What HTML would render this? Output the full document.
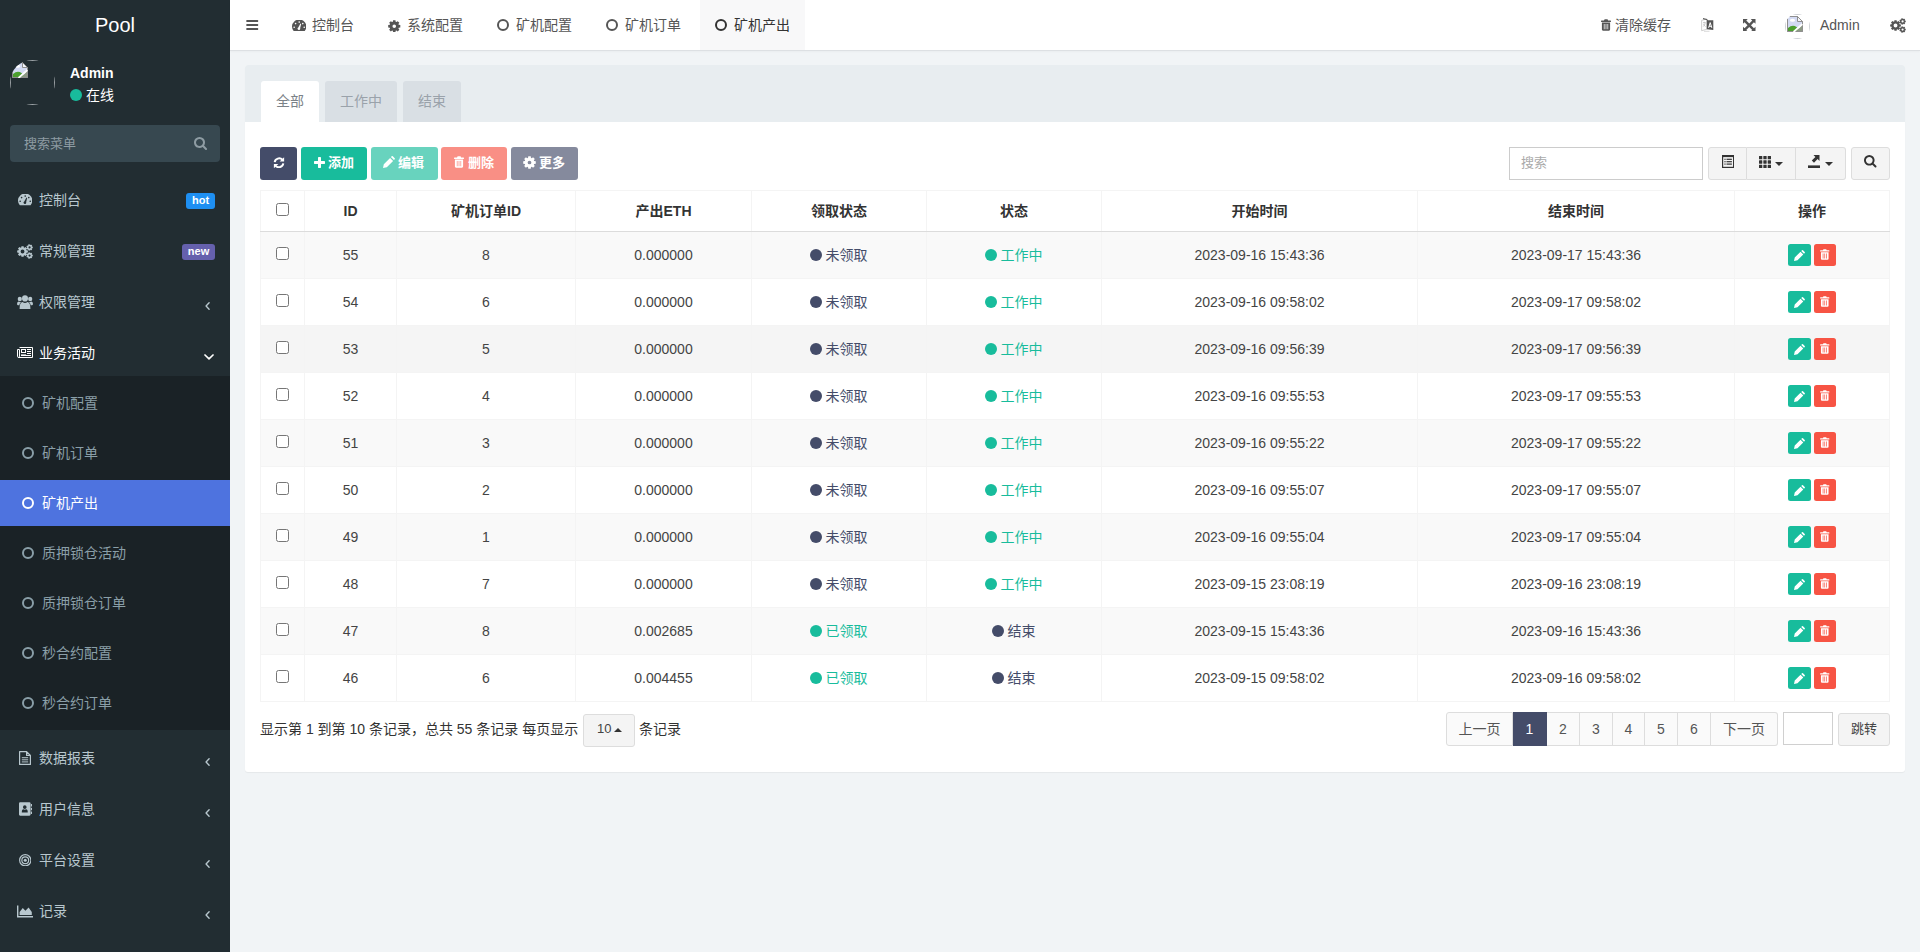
<!DOCTYPE html>
<html lang="zh-CN">
<head>
<meta charset="utf-8">
<title>Pool</title>
<style>
*{box-sizing:border-box;margin:0;padding:0}
html,body{width:1920px;height:952px;overflow:hidden}
body{font-family:"Liberation Sans","Noto Sans CJK SC",sans-serif;font-size:14px;color:#444;background:#f1f4f6;position:relative}
a{text-decoration:none;color:inherit;display:block}
ul{list-style:none}
svg{display:block}
i{font-style:normal}
/* sidebar */
.sidebar{position:absolute;left:0;top:0;width:230px;height:952px;background:#222d32;color:#b8c7ce}
.logo{height:50px;line-height:50px;text-align:center;color:#fff;font-size:20px}
.user{position:absolute;left:0;top:50px;width:230px;height:65px}
.user .avatar{position:absolute;left:10px;top:10px;width:45px;height:45px;border-radius:50%;overflow:hidden}
.sq{position:absolute;left:0;top:0;right:0;bottom:0;border:1px solid #9aa0a4}
.bk{position:absolute;left:2px;top:2px}
.user .name{position:absolute;left:70px;top:14px;color:#fff;font-weight:bold;font-size:14px;line-height:18px}
.user .st{position:absolute;left:70px;top:36px;color:#fff;font-size:14px;line-height:18px}
.user .st i{display:inline-block;width:12px;height:12px;border-radius:50%;background:#18bc9c;margin-right:4px;vertical-align:-1px}
.msearch{position:absolute;left:10px;top:125px;width:210px;height:37px;background:#374850;border-radius:4px;color:#8e9ca3;font-size:13px;line-height:38px;padding-left:14px}
.msearch .sic{position:absolute;left:184px;top:12px}
.menu{position:absolute;left:0;top:177px;width:230px}
.menu li.m{height:46px;margin-bottom:5px;position:relative;color:#b8c7ce;font-size:14px}
.menu li.m .ic{position:absolute;left:15px;top:13px;width:20px;height:20px;display:flex;align-items:center;justify-content:center}
.menu li.m .tx{position:absolute;left:39px;top:13px;line-height:20px}
.menu li.m .arr{position:absolute;left:205px;top:23px}
.menu li.m .arr.dn{left:204px;top:24px}
.menu li.m.act{color:#fff;margin-bottom:0}
.badge{position:absolute;top:16px;height:16px;border-radius:3px;color:#fff;font-size:11px;font-weight:bold;line-height:15px;text-align:center}
.subw{margin-bottom:5px}
.sub{background:#1a2226;height:354px;padding-top:4px}
.sub li{height:46px;margin-bottom:4px;position:relative;color:#8a9fa8;font-size:14px}
.o{display:block;width:12px;height:12px;border:2px solid #8a9fa8;border-radius:50%}
.sub li .o{position:absolute;left:22px;top:17px}
.sub li .tx{position:absolute;left:42px;top:13px;line-height:20px}
.sub li.on{background:#4e73df;color:#fff}
.sub li.on .o{border-color:#fff}
/* header */
.header{position:absolute;left:230px;top:0;width:1690px;height:51px;background:#fff;border-bottom:1px solid #dde0e3;box-shadow:0 1px 2px rgba(0,0,0,.03)}
.header .t{position:absolute;top:0;height:50px;line-height:50px;color:#555;font-size:14px;white-space:nowrap}
.header .t .hi{position:absolute}
.header .t .tt{position:absolute;top:0}
.header .t.cur{background:#f8f8f9;color:#333}
.uav{position:absolute;left:0;top:14px;width:25px;height:25px;border-radius:50%;overflow:hidden}
.uav .sq{border-color:#cfd2d6}.uav .bk{left:2px;top:2px}
/* panel */
.panel{position:absolute;left:245px;top:65px;width:1660px;height:707px;background:#fff;border-radius:3px;box-shadow:0 1px 1px rgba(0,0,0,.05)}
.phead{position:absolute;left:0;top:0;width:1660px;height:57px;background:#e8edf0;border-radius:3px 3px 0 0}
.tab{position:absolute;top:16px;height:41px;line-height:40px;text-align:center;background:#d9dfe4;color:#9aa2aa;font-size:14px;border-radius:3px 3px 0 0}
.tab.on{background:#fff;color:#7b8288}
.toolbar{position:absolute;left:0;top:82px;width:1660px;height:33px}
.btn{position:absolute;top:0;height:33px;border-radius:3px;color:#fff;font-size:13px;line-height:31px;white-space:nowrap}
.btn .bi,.gb .bi{position:absolute}
.btn .bt{position:absolute;top:0;font-weight:bold}
.b-pri{background:#444c69}.b-suc{background:#18bc9c}.b-dan{background:#f75444}
.btn.dis{opacity:.65}
.sinput{position:absolute;left:1264px;top:0;width:194px;height:33px;border:1px solid #ccc;background:#fff;color:#aaa;font-size:13px;line-height:30px;padding-left:11px}
.bgroup{position:absolute;left:1463px;top:0;width:138px;height:33px}
.gb{position:absolute;top:0;height:33px;background:#f4f4f4;border:1px solid #ddd;border-left-width:0}
.bgroup .gb:first-child{border-left-width:1px;border-radius:3px 0 0 3px}
.bgroup .gb:last-child{border-radius:0 3px 3px 0}
.gb.solo{border-left-width:1px;border-radius:3px}
/* table */
.tb{position:absolute;left:15px;top:125px;width:1630px;border-collapse:collapse;table-layout:fixed;border:1px solid #f4f4f4}
.tb th,.tb td{border:1px solid #f4f4f4;text-align:center;vertical-align:middle;font-size:14px;color:#444;padding:0}
.tb th{height:41px;font-weight:bold;color:#333;border-bottom:1px solid #dcdcdc;padding-bottom:2px}
.tb td{height:47px}
.tb tbody tr:nth-child(odd){background:#f9f9f9}
.tb tbody tr:nth-child(3){background:#f5f5f5}
.cb{display:inline-block;width:13px;height:13px;border:1px solid #767676;border-radius:2.500px;background:#fff;vertical-align:middle;position:relative;top:-3px}
.s{display:inline-block;white-space:nowrap;position:relative;top:-1px;left:-.5px}
.s i{display:inline-block;width:12px;height:12px;border-radius:50%;margin-right:4px;vertical-align:-1px}
.s.p{color:#444c69}.s.p i{background:#444c69}
.s.g{color:#18bc9c}.s.g i{background:#18bc9c}
.ob{display:inline-block;width:22.500px;height:22px;border-radius:2.500px;vertical-align:middle;position:relative}
.ob svg{position:absolute}
.ob.e{background:#18bc9c;margin-right:3.500px}.ob.e svg{left:6px;top:5.500px}
.ob.d{background:#f75444;width:21.500px}.ob.d svg{left:6px;top:5px}
/* footer */
.pinfo{position:absolute;left:15px;top:648px;height:33px;line-height:33px;font-size:14px;color:#333;white-space:nowrap}
.psize{display:inline-block;width:52px;height:33px;line-height:28px;left:1px;color:#444;border:1px solid #ddd;border-radius:3px;background:#f4f4f4;font-size:13px;padding-left:13px;position:relative;vertical-align:middle;margin:0 1px 0 0}
.psize .cu{position:absolute;left:30px;top:13px}
.pager{position:absolute;left:1201px;top:647px;height:34px;display:flex}
.pager li{height:34px;line-height:32px;text-align:center;border:1px solid #ddd;border-left-width:0;background:#fafafa;color:#555;font-size:14px}
.pager li:first-child{border-left-width:1px;border-radius:3px 0 0 3px}
.pager li:last-child{border-radius:0 3px 3px 0}
.pager li.on{background:#444c69;border-color:#444c69;color:#fff}
.jump{position:absolute;left:1538px;top:647px;width:50px;height:33px;border:1px solid #d0d0d0;background:#fff}
.jbtn{position:absolute;left:1593px;top:648px;width:52px;height:33px;line-height:29px;text-align:center;border:1px solid #ddd;border-radius:3px;background:#f4f4f4;color:#444;font-size:13px}
.tb th .cb{top:-2px}
.tb th .lat{position:relative;top:1px}
</style>
</head>
<body>
<aside class="sidebar">
<a class="logo">Pool</a>
<div class="user"><div class="avatar"><span class="sq"></span><span class="bk"><svg width="16" height="16" viewBox="0 0 16 16" ><path d="M.5 .5 H10.500 L15.500 5.500 V15.500 H.5Z" fill="#d3daf3" stroke="#8f8f8f" stroke-width="1"/><ellipse cx="5.500" cy="4.300" rx="2.600" ry="1.500" fill="#fff"/><path d="M1 15 V12 Q5.500 8 9.500 11 L14.800 15Z" fill="#4c9f2f"/><path d="M15 9 V15 H9.500Z" fill="#8d9a86"/><path d="M6.500 16 L16 7.500" stroke="#fff" stroke-width="1.800" fill="none"/><path d="M10.500 .5 V5.500 H15.500Z" fill="#f4f5fa" stroke="#8f8f8f" stroke-width="1" stroke-linejoin="round"/><path d="M.5 .5 H10.500 L15.500 5.500 V8.300 M15.500 11.500 V15.500 H9.300 M5.800 15.500 H.5 V.5" fill="none" stroke="#8f8f8f" stroke-width="1"/></svg></span></div><p class="name">Admin</p><p class="st"><i></i>在线</p></div>
<div class="msearch">搜索菜单<span class="sic"><svg width="13" height="13" viewBox="64 128 1664 1664" ><path fill="#8e9ca3" d="M1216 832q0-185-131.500-316.500t-316.500-131.500-316.500 131.500-131.500 316.500 131.500 316.500 316.500 131.500 316.500-131.500 131.500-316.500zm512 832q0 52-38 90t-90 38q-54 0-90-38l-343-342q-179 124-399 124-143 0-273.500-55.500t-225-150-150-225-55.500-273.500 55.500-273.500 150-225 225-150 273.500-55.500 273.500 55.500 225 150 150 225 55.500 273.500q0 220-124 399l343 343q37 37 37 90z"/></svg></span></div>
<ul class="menu">
<li class="m "><span class="ic"><svg width="14.4" height="11.2" viewBox="0 0 14 11.200" preserveAspectRatio="none"><path fill="#b8c7ce" fill-rule="evenodd" d="M1.6 11 A7 7 0 1 1 12.4 11 Q12.2 11.200 11.800 11.200 H2.200 Q1.800 11.200 1.600 11Z M1.30 7.20 a.8 .8 0 1 0 1.6 0 a.8 .8 0 1 0 -1.6 0Z M2.70 3.60 a.8 .8 0 1 0 1.6 0 a.8 .8 0 1 0 -1.6 0Z M6.20 2.10 a.8 .8 0 1 0 1.6 0 a.8 .8 0 1 0 -1.6 0Z M9.70 3.60 a.8 .8 0 1 0 1.6 0 a.8 .8 0 1 0 -1.6 0Z M11.10 7.20 a.8 .8 0 1 0 1.6 0 a.8 .8 0 1 0 -1.6 0Z M6.1 7.6 L8.2 3.6 L8.9 3.9 L7.9 8.200 A1.300 1.300 0 1 1 6.100 7.600Z"/></svg></span><span class="tx">控制台</span><span class="badge" style="left:186px;width:29px;background:#1e8ff2">hot</span></li>
<li class="m "><span class="ic"><svg width="16" height="15" viewBox="0 0 18 17" ><path fill="#b8c7ce" fill-rule="evenodd" d="M10.67 7.05 L12.28 7.26 L12.28 9.74 L10.67 9.95 L10.39 10.63 L11.37 11.92 L9.62 13.67 L8.33 12.69 L7.65 12.97 L7.44 14.58 L4.96 14.58 L4.75 12.97 L4.07 12.69 L2.78 13.67 L1.03 11.92 L2.01 10.63 L1.73 9.95 L0.12 9.74 L0.12 7.26 L1.73 7.05 L2.01 6.37 L1.03 5.08 L2.78 3.33 L4.07 4.31 L4.75 4.03 L4.96 2.42 L7.44 2.42 L7.65 4.03 L8.33 4.31 L9.62 3.33 L11.37 5.08 L10.39 6.37Z M4.00 8.50 a2.20 2.20 0 1 0 4.40 0 a2.20 2.20 0 1 0 -4.40 0Z"/><path fill="#b8c7ce" fill-rule="evenodd" d="M16.81 2.89 L17.80 3.03 L17.80 4.77 L16.81 4.91 L16.62 5.31 L17.12 6.17 L15.76 7.25 L15.04 6.57 L14.61 6.67 L14.25 7.60 L12.55 7.21 L12.63 6.22 L12.29 5.95 L11.34 6.24 L10.58 4.68 L11.41 4.12 L11.41 3.68 L10.58 3.12 L11.34 1.56 L12.29 1.85 L12.63 1.58 L12.55 0.59 L14.25 0.20 L14.61 1.13 L15.04 1.23 L15.76 0.55 L17.12 1.63 L16.62 2.49Z M12.95 3.90 a1.25 1.25 0 1 0 2.50 0 a1.25 1.25 0 1 0 -2.50 0Z"/><path fill="#b8c7ce" fill-rule="evenodd" d="M16.81 12.09 L17.80 12.23 L17.80 13.97 L16.81 14.11 L16.62 14.51 L17.12 15.37 L15.76 16.45 L15.04 15.77 L14.61 15.87 L14.25 16.80 L12.55 16.41 L12.63 15.42 L12.29 15.15 L11.34 15.44 L10.58 13.88 L11.41 13.32 L11.41 12.88 L10.58 12.32 L11.34 10.76 L12.29 11.05 L12.63 10.78 L12.55 9.79 L14.25 9.40 L14.61 10.33 L15.04 10.43 L15.76 9.75 L17.12 10.83 L16.62 11.69Z M12.95 13.10 a1.25 1.25 0 1 0 2.50 0 a1.25 1.25 0 1 0 -2.50 0Z"/></svg></span><span class="tx">常规管理</span><span class="badge" style="left:182px;width:33px;background:#6560ad">new</span></li>
<li class="m "><span class="ic"><svg width="16" height="14.5" viewBox="0 0 16 14" preserveAspectRatio="none"><circle cx="8" cy="3.300" r="3" fill="#b8c7ce"/><path fill="#b8c7ce" d="M3.200 14 Q2.600 14 2.600 13 Q2.600 7 5.600 6.800 Q8 8.800 10.400 6.800 Q13.400 7 13.400 13 Q13.400 14 12.800 14Z"/><circle cx="2.800" cy="3.900" r="2.100" fill="#b8c7ce"/><path fill="#b8c7ce" d="M0 8.800 Q0 6.300 1.700 6.200 Q2.900 7 4.300 6.500 Q2.600 7.600 2.300 9.800 H.9 Q0 9.800 0 8.800Z"/><circle cx="13.200" cy="3.900" r="2.100" fill="#b8c7ce"/><path fill="#b8c7ce" d="M16 8.800 Q16 6.300 14.300 6.200 Q13.100 7 11.700 6.500 Q13.400 7.600 13.700 9.800 H15.100 Q16 9.800 16 8.800Z"/></svg></span><span class="tx">权限管理</span><span class="arr"><svg width="5" height="8" viewBox="0 0 6 10" ><path d="M5 1 L1.2 5 L5 9" fill="none" stroke="#b8c7ce" stroke-width="1.7" stroke-linecap="round" stroke-linejoin="round"/></svg></span></li>
<li class="m act"><span class="ic"><span style="display:block;margin-top:-2px"><svg width="16" height="11" viewBox="0 0 16 11" ><path fill="none" stroke="#fff" stroke-width="1" d="M2.500 .5 H15.500 V10.500 H1.800 Q.5 10.500 .5 9.200 V2.500 H2.500 V9.200 Q2.500 10.500 1.500 10.500"/><rect x="4.500" y="2.500" width="4" height="3" fill="none" stroke="#fff" stroke-width="1"/><rect x="10" y="2" width="4" height="1" fill="#fff"/><rect x="10" y="4" width="4" height="1" fill="#fff"/><rect x="10" y="6" width="4" height="1" fill="#fff"/><rect x="4" y="8" width="10" height="1" fill="#fff"/><rect x="4" y="7" width="5" height=".6" fill="#fff"/></svg></span></span><span class="tx">业务活动</span><span class="arr dn"><svg width="10" height="6" viewBox="0 0 10 6" ><path d="M1 1 L5 4.8 L9 1" fill="none" stroke="#fff" stroke-width="1.7" stroke-linecap="round" stroke-linejoin="round"/></svg></span></li>
<li class="subw"><ul class="sub">
<li><i class="o"></i><span class="tx">矿机配置</span></li>
<li><i class="o"></i><span class="tx">矿机订单</span></li>
<li class="on"><i class="o"></i><span class="tx">矿机产出</span></li>
<li><i class="o"></i><span class="tx">质押锁仓活动</span></li>
<li><i class="o"></i><span class="tx">质押锁仓订单</span></li>
<li><i class="o"></i><span class="tx">秒合约配置</span></li>
<li><i class="o"></i><span class="tx">秒合约订单</span></li>
</ul></li>
<li class="m "><span class="ic"><svg width="12" height="14" viewBox="0 0 12 14" ><path fill="none" stroke="#b8c7ce" stroke-width="1.200" stroke-linejoin="round" d="M.6 .6 H7.600 L11.400 4.400 V13.400 H.6Z M7.600 .6 V4.400 H11.400"/><rect x="2.800" y="6.200" width="6.400" height="1" fill="#b8c7ce"/><rect x="2.800" y="8.300" width="6.400" height="1" fill="#b8c7ce"/><rect x="2.800" y="10.400" width="6.400" height="1" fill="#b8c7ce"/></svg></span><span class="tx">数据报表</span><span class="arr"><svg width="5" height="8" viewBox="0 0 6 10" ><path d="M5 1 L1.2 5 L5 9" fill="none" stroke="#b8c7ce" stroke-width="1.7" stroke-linecap="round" stroke-linejoin="round"/></svg></span></li>
<li class="m "><span class="ic"><svg width="13" height="14" viewBox="0 0 13.500 14" ><path fill="#b8c7ce" fill-rule="evenodd" d="M1.200 0 H10.800 Q12 0 12 1.200 V12.800 Q12 14 10.800 14 H1.200 Q0 14 0 12.800 V1.200 Q0 0 1.200 0Z M6 3.200 A1.900 1.900 0 1 0 6 7 A1.900 1.900 0 1 0 6 3.200Z M2.900 10.600 H9.100 Q9.100 7.400 7.400 7.300 Q6 8.300 4.600 7.300 Q2.900 7.400 2.900 10.600Z"/><rect x="12.300" y="1.800" width="1.200" height="2.600" rx=".3" fill="#b8c7ce"/><rect x="12.300" y="5.700" width="1.200" height="2.600" rx=".3" fill="#b8c7ce"/><rect x="12.300" y="9.600" width="1.200" height="2.600" rx=".3" fill="#b8c7ce"/></svg></span><span class="tx">用户信息</span><span class="arr"><svg width="5" height="8" viewBox="0 0 6 10" ><path d="M5 1 L1.2 5 L5 9" fill="none" stroke="#b8c7ce" stroke-width="1.7" stroke-linecap="round" stroke-linejoin="round"/></svg></span></li>
<li class="m "><span class="ic"><svg width="12.5" height="12.5" viewBox="0 0 14 14" ><circle cx="7" cy="7" r="6.300" fill="none" stroke="#b8c7ce" stroke-width="1.300"/><circle cx="7" cy="7" r="3.800" fill="none" stroke="#b8c7ce" stroke-width="1.300"/><circle cx="7" cy="7" r="1.700" fill="#b8c7ce"/></svg></span><span class="tx">平台设置</span><span class="arr"><svg width="5" height="8" viewBox="0 0 6 10" ><path d="M5 1 L1.2 5 L5 9" fill="none" stroke="#b8c7ce" stroke-width="1.7" stroke-linecap="round" stroke-linejoin="round"/></svg></span></li>
<li class="m "><span class="ic"><svg width="16" height="13" viewBox="0 0 16 12" ><path fill="#b8c7ce" d="M0 0 H1.400 V10.600 H16 V12 H0Z M2.600 9.600 V6.400 L5.800 2.600 L8.400 5.200 L11.600 2 L14.800 6.400 V9.600Z"/></svg></span><span class="tx">记录</span><span class="arr"><svg width="5" height="8" viewBox="0 0 6 10" ><path d="M5 1 L1.2 5 L5 9" fill="none" stroke="#b8c7ce" stroke-width="1.7" stroke-linecap="round" stroke-linejoin="round"/></svg></span></li>
</ul>
</aside>
<header class="header">
<a class="t" style="left:16px;width:14px"><span class="hi" style="left:0;top:20px"><svg width="12.5" height="10" viewBox="0 0 13 11" ><rect x="0" y="0" width="13" height="2.2" rx=".6" fill="#555"/><rect x="0" y="4.4" width="13" height="2.2" rx=".6" fill="#555"/><rect x="0" y="8.8" width="13" height="2.2" rx=".6" fill="#555"/></svg></span></a>
<a class="t" style="left:47px;width:92px"><span class="hi" style="left:15px;top:20px"><svg width="14.4" height="11.2" viewBox="0 0 14 11.200" preserveAspectRatio="none"><path fill="#555" fill-rule="evenodd" d="M1.6 11 A7 7 0 1 1 12.4 11 Q12.2 11.200 11.800 11.200 H2.200 Q1.800 11.200 1.600 11Z M1.30 7.20 a.8 .8 0 1 0 1.6 0 a.8 .8 0 1 0 -1.6 0Z M2.70 3.60 a.8 .8 0 1 0 1.6 0 a.8 .8 0 1 0 -1.6 0Z M6.20 2.10 a.8 .8 0 1 0 1.6 0 a.8 .8 0 1 0 -1.6 0Z M9.70 3.60 a.8 .8 0 1 0 1.6 0 a.8 .8 0 1 0 -1.6 0Z M11.10 7.20 a.8 .8 0 1 0 1.6 0 a.8 .8 0 1 0 -1.6 0Z M6.1 7.6 L8.2 3.6 L8.9 3.9 L7.9 8.200 A1.300 1.300 0 1 1 6.100 7.600Z"/></svg></span><span class="tt" style="left:35px">控制台</span></a>
<a class="t" style="left:143px;width:105px"><span class="hi" style="left:15px;top:19.5px"><svg width="12.5" height="12.5" viewBox="0 0 16 16" ><path fill="#555" fill-rule="evenodd" d="M13.72 6.20 L15.75 6.47 L15.75 9.53 L13.72 9.80 L13.32 10.78 L14.56 12.40 L12.40 14.56 L10.78 13.32 L9.80 13.72 L9.53 15.75 L6.47 15.75 L6.20 13.72 L5.22 13.32 L3.60 14.56 L1.44 12.40 L2.68 10.78 L2.28 9.80 L0.25 9.53 L0.25 6.47 L2.28 6.20 L2.68 5.22 L1.44 3.60 L3.60 1.44 L5.22 2.68 L6.20 2.28 L6.47 0.25 L9.53 0.25 L9.80 2.28 L10.78 2.68 L12.40 1.44 L14.56 3.60 L13.32 5.22Z M5.70 8.00 a2.30 2.30 0 1 0 4.60 0 a2.30 2.30 0 1 0 -4.60 0Z"/></svg></span><span class="tt" style="left:34px">系统配置</span></a>
<a class="t" style="left:252px;width:105px"><span class="hi" style="left:15px;top:19px"><i class="o" style="border-color:#555"></i></span><span class="tt" style="left:34px">矿机配置</span></a>
<a class="t" style="left:361px;width:105px"><span class="hi" style="left:15px;top:19px"><i class="o" style="border-color:#555"></i></span><span class="tt" style="left:34px">矿机订单</span></a>
<a class="t cur" style="left:470px;width:105px"><span class="hi" style="left:15px;top:19px"><i class="o" style="border-color:#333"></i></span><span class="tt" style="left:34px">矿机产出</span></a>
<a class="t" style="left:1371px;width:72px"><span class="hi" style="left:0;top:19px"><svg width="10" height="12" viewBox="0 0 11 13" ><path fill="#555" fill-rule="evenodd" d="M4 0.3h3.2l.6 1.3H10.6q.4 0 .4.4v.7q0 .4-.4.4H.4Q0 3.100 0 2.700V2q0-.4.4-.4H3.300Z M1 3.800H10V11.500q0 1.200-1.200 1.200H2.200Q1 12.700 1 11.500Z M3.100 5.400V11.200H3.900V5.400Z M5.100 5.400V11.200H5.900V5.400Z M7.100 5.400V11.200H7.900V5.400Z"/></svg></span><span class="tt" style="left:14px">清除缓存</span></a>
<a class="t" style="left:1471px;width:13px"><span class="hi" style="left:0;top:17px"><svg width="13" height="15" viewBox="0 0 13 15" ><path d="M.6 3.400 L5.800 2 V12.300 L.6 13.700Z" fill="#fff" stroke="#c9c9c9" stroke-width=".9"/><path d="M2 5.600 H4.600 M3.300 4.800 V5.600 M2.200 9.600 Q3.900 8.300 4.300 5.600 M2.400 6.800 Q3 8.600 4.600 9.600" fill="none" stroke="#b5b5b5" stroke-width=".7"/><path d="M2 1 L5.800 2 L7 3.300 H12.300 V13 L5.800 12.300 V3 L2 2.200Z" fill="#555"/><path d="M7.600 10.800 L9.200 5.600 L10.800 10.800 M8.100 9.300 H10.300" fill="none" stroke="#fff" stroke-width="1"/><path d="M3 14.300 H8.500" stroke="#c9c9c9" stroke-width=".7"/></svg></span></a>
<a class="t" style="left:1513px;width:13px"><span class="hi" style="left:0;top:18.500px"><svg width="12.5" height="12.5" viewBox="0 0 13 13" ><path fill="#555" d="M0 0 H5 L3.400 1.600 L6.500 4.700 L8.600 2.600 L9.600 1.600 L8 0 H13 V5 L11.400 3.400 L8.300 6.500 L11.400 9.600 L13 8 V13 H8 L9.600 11.400 L6.500 8.300 L3.400 11.400 L5 13 H0 V8 L1.600 9.600 L4.700 6.500 L1.600 3.400 L0 5Z"/></svg></span></a>
<a class="t" style="left:1555px;width:76px"><span class="uav"><span class="sq"></span><span class="bk"><svg width="16" height="16" viewBox="0 0 16 16" ><path d="M.5 .5 H10.500 L15.500 5.500 V15.500 H.5Z" fill="#d3daf3" stroke="#8f8f8f" stroke-width="1"/><ellipse cx="5.500" cy="4.300" rx="2.600" ry="1.500" fill="#fff"/><path d="M1 15 V12 Q5.500 8 9.500 11 L14.800 15Z" fill="#4c9f2f"/><path d="M15 9 V15 H9.500Z" fill="#8d9a86"/><path d="M6.500 16 L16 7.500" stroke="#fff" stroke-width="1.800" fill="none"/><path d="M10.500 .5 V5.500 H15.500Z" fill="#f4f5fa" stroke="#8f8f8f" stroke-width="1" stroke-linejoin="round"/><path d="M.5 .5 H10.500 L15.500 5.500 V8.300 M15.500 11.500 V15.500 H9.300 M5.800 15.500 H.5 V.5" fill="none" stroke="#8f8f8f" stroke-width="1"/></svg></span></span><span class="tt" style="left:35px">Admin</span></a>
<a class="t" style="left:1660px;width:16px"><span class="hi" style="left:0;top:18px"><svg width="16" height="15" viewBox="0 0 18 17" ><path fill="#555" fill-rule="evenodd" d="M10.67 7.05 L12.28 7.26 L12.28 9.74 L10.67 9.95 L10.39 10.63 L11.37 11.92 L9.62 13.67 L8.33 12.69 L7.65 12.97 L7.44 14.58 L4.96 14.58 L4.75 12.97 L4.07 12.69 L2.78 13.67 L1.03 11.92 L2.01 10.63 L1.73 9.95 L0.12 9.74 L0.12 7.26 L1.73 7.05 L2.01 6.37 L1.03 5.08 L2.78 3.33 L4.07 4.31 L4.75 4.03 L4.96 2.42 L7.44 2.42 L7.65 4.03 L8.33 4.31 L9.62 3.33 L11.37 5.08 L10.39 6.37Z M4.00 8.50 a2.20 2.20 0 1 0 4.40 0 a2.20 2.20 0 1 0 -4.40 0Z"/><path fill="#555" fill-rule="evenodd" d="M16.81 2.89 L17.80 3.03 L17.80 4.77 L16.81 4.91 L16.62 5.31 L17.12 6.17 L15.76 7.25 L15.04 6.57 L14.61 6.67 L14.25 7.60 L12.55 7.21 L12.63 6.22 L12.29 5.95 L11.34 6.24 L10.58 4.68 L11.41 4.12 L11.41 3.68 L10.58 3.12 L11.34 1.56 L12.29 1.85 L12.63 1.58 L12.55 0.59 L14.25 0.20 L14.61 1.13 L15.04 1.23 L15.76 0.55 L17.12 1.63 L16.62 2.49Z M12.95 3.90 a1.25 1.25 0 1 0 2.50 0 a1.25 1.25 0 1 0 -2.50 0Z"/><path fill="#555" fill-rule="evenodd" d="M16.81 12.09 L17.80 12.23 L17.80 13.97 L16.81 14.11 L16.62 14.51 L17.12 15.37 L15.76 16.45 L15.04 15.77 L14.61 15.87 L14.25 16.80 L12.55 16.41 L12.63 15.42 L12.29 15.15 L11.34 15.44 L10.58 13.88 L11.41 13.32 L11.41 12.88 L10.58 12.32 L11.34 10.76 L12.29 11.05 L12.63 10.78 L12.55 9.79 L14.25 9.40 L14.61 10.33 L15.04 10.43 L15.76 9.75 L17.12 10.83 L16.62 11.69Z M12.95 13.10 a1.25 1.25 0 1 0 2.50 0 a1.25 1.25 0 1 0 -2.50 0Z"/></svg></span></a>
</header>
<section class="panel">
<div class="phead">
<a class="tab on" style="left:16px;width:58px">全部</a><a class="tab" style="left:80px;width:72px">工作中</a><a class="tab" style="left:158px;width:58px">结束</a>
</div>
<div class="toolbar">
<a class="btn b-pri" style="left:15px;width:37px"><span class="bi" style="left:12.500px;top:9.500px"><svg width="12" height="11.52" viewBox="0 0 14 14" preserveAspectRatio="none"><path fill="none" stroke="#fff" stroke-width="2.3" d="M2 6.200 A5.200 5.200 0 0 1 11 3.300"/><path fill="#fff" d="M13 0.300 V5.600 H7.700Z"/><path fill="none" stroke="#fff" stroke-width="2.3" d="M12 7.800 A5.200 5.200 0 0 1 3 10.700"/><path fill="#fff" d="M1 13.700 V8.400 H6.300Z"/></svg></span></a>
<a class="btn b-suc" style="left:56px;width:66px"><span class="bi" style="left:13px;top:9.500px"><svg width="11" height="11" viewBox="192 128 1408 1408" ><path fill="#fff" d="M1600 736v192q0 40-28 68t-68 28h-416v416q0 40-28 68t-68 28h-192q-40 0-68-28t-28-68v-416h-416q-40 0-68-28t-28-68v-192q0-40 28-68t68-28h416v-416q0-40 28-68t68-28h192q40 0 68 28t28 68v416h416q40 0 68 28t28 68z"/></svg></span><span class="bt" style="left:27px">添加</span></a>
<a class="btn b-suc dis" style="left:126px;width:67px"><span class="bi" style="left:12px;top:9px"><svg width="12" height="12" viewBox="0 0 12 12" ><path fill="#fff" d="M0 12 L.8 8.200 L7.100 1.900 L10.100 4.900 L3.800 11.200Z M7.900 1.100 L8.700 .3 Q9.200 -.2 9.800 .3 L11.700 2.200 Q12.200 2.800 11.700 3.300 L10.900 4.100Z"/></svg></span><span class="bt" style="left:27px">编辑</span></a>
<a class="btn b-dan dis" style="left:196px;width:66px"><span class="bi" style="left:13px;top:9px"><svg width="10" height="12" viewBox="0 0 11 13" ><path fill="#fff" fill-rule="evenodd" d="M4 0.3h3.2l.6 1.3H10.6q.4 0 .4.4v.7q0 .4-.4.4H.4Q0 3.100 0 2.700V2q0-.4.4-.4H3.300Z M1 3.800H10V11.500q0 1.200-1.200 1.200H2.200Q1 12.700 1 11.500Z M3.100 5.400V11.200H3.900V5.400Z M5.100 5.400V11.200H5.900V5.400Z M7.100 5.400V11.200H7.900V5.400Z"/></svg></span><span class="bt" style="left:27px">删除</span></a>
<a class="btn b-pri dis" style="left:266px;width:67px"><span class="bi" style="left:12px;top:9px"><svg width="13" height="13" viewBox="0 0 16 16" ><path fill="#fff" fill-rule="evenodd" d="M13.72 6.20 L15.75 6.47 L15.75 9.53 L13.72 9.80 L13.32 10.78 L14.56 12.40 L12.40 14.56 L10.78 13.32 L9.80 13.72 L9.53 15.75 L6.47 15.75 L6.20 13.72 L5.22 13.32 L3.60 14.56 L1.44 12.40 L2.68 10.78 L2.28 9.80 L0.25 9.53 L0.25 6.47 L2.28 6.20 L2.68 5.22 L1.44 3.60 L3.60 1.44 L5.22 2.68 L6.20 2.28 L6.47 0.25 L9.53 0.25 L9.80 2.28 L10.78 2.68 L12.40 1.44 L14.56 3.60 L13.32 5.22Z M5.70 8.00 a2.30 2.30 0 1 0 4.60 0 a2.30 2.30 0 1 0 -4.60 0Z"/></svg></span><span class="bt" style="left:28px">更多</span></a>
<div class="sinput">搜索</div>
<div class="bgroup"><a class="gb" style="left:0;width:39px"><span class="bi" style="left:13px;top:7px"><svg width="12.2" height="13" viewBox="0 0 12.200 13" ><rect x=".6" y=".6" width="11" height="11.800" fill="none" stroke="#333" stroke-width="1.200"/><rect x=".6" y=".6" width="11" height="1.500" fill="#333"/><rect x="2.400" y="3.700" width="1.200" height="1.200" fill="#333"/><rect x="4.500" y="3.700" width="5.400" height="1.200" fill="#333"/><rect x="2.400" y="6.100" width="1.200" height="1.200" fill="#333"/><rect x="4.500" y="6.100" width="5.400" height="1.200" fill="#333"/><rect x="2.400" y="8.500" width="1.200" height="1.200" fill="#333"/><rect x="4.500" y="8.500" width="5.400" height="1.200" fill="#333"/></svg></span></a><a class="gb" style="left:39px;width:49px"><span class="bi" style="left:12px;top:8px"><svg width="12" height="12" viewBox="0 0 12 12" ><rect x="0.00" y="0.00" width="3.300" height="3.300" rx=".3" fill="#333"/><rect x="0.00" y="4.35" width="3.300" height="3.300" rx=".3" fill="#333"/><rect x="0.00" y="8.70" width="3.300" height="3.300" rx=".3" fill="#333"/><rect x="4.35" y="0.00" width="3.300" height="3.300" rx=".3" fill="#333"/><rect x="4.35" y="4.35" width="3.300" height="3.300" rx=".3" fill="#333"/><rect x="4.35" y="8.70" width="3.300" height="3.300" rx=".3" fill="#333"/><rect x="8.70" y="0.00" width="3.300" height="3.300" rx=".3" fill="#333"/><rect x="8.70" y="4.35" width="3.300" height="3.300" rx=".3" fill="#333"/><rect x="8.70" y="8.70" width="3.300" height="3.300" rx=".3" fill="#333"/></svg></span><span class="bi" style="left:28px;top:14px"><svg width="8" height="4" viewBox="0 0 8 4" ><path fill="#333" d="M0 0 H8 L4 4Z"/></svg></span></a><a class="gb" style="left:88px;width:50px"><span class="bi" style="left:12px;top:7px"><svg width="12" height="13" viewBox="0 0 12 13" ><rect x="0" y="10.400" width="12" height="2.600" fill="#333"/><path fill="#333" d="M5.500 0 H11.500 V6 L9.600 4.100 L6 7.700 L3.800 5.500 L7.400 1.900Z"/></svg></span><span class="bi" style="left:29px;top:14px"><svg width="8" height="4" viewBox="0 0 8 4" ><path fill="#333" d="M0 0 H8 L4 4Z"/></svg></span></a></div>
<a class="gb solo" style="left:1606px;width:39px"><span class="bi" style="left:12px;top:7px"><svg width="12.5" height="12.5" viewBox="64 128 1664 1664" ><path fill="#333" d="M1216 832q0-185-131.500-316.500t-316.500-131.500-316.500 131.500-131.500 316.500 131.500 316.500 316.500 131.500 316.500-131.500 131.500-316.500zm512 832q0 52-38 90t-90 38q-54 0-90-38l-343-342q-179 124-399 124-143 0-273.500-55.500t-225-150-150-225-55.500-273.500 55.500-273.500 150-225 225-150 273.500-55.500 273.500 55.500 225 150 150 225 55.500 273.500q0 220-124 399l343 343q37 37 37 90z"/></svg></span></a>
</div>
<table class="tb">
<colgroup><col style="width:44px"><col style="width:92px"><col style="width:179px"><col style="width:176px"><col style="width:175px"><col style="width:175px"><col style="width:316px"><col style="width:317px"><col style="width:155px"></colgroup>
<thead><tr><th><i class="cb"></i></th><th><span class="lat">ID</span></th><th>矿机订单ID</th><th>产出ETH</th><th>领取状态</th><th>状态</th><th>开始时间</th><th>结束时间</th><th>操作</th></tr></thead>
<tbody>
<tr><td><i class="cb"></i></td><td>55</td><td>8</td><td>0.000000</td><td><span class="s p"><i></i>未领取</span></td><td><span class="s g"><i></i>工作中</span></td><td>2023-09-16 15:43:36</td><td>2023-09-17 15:43:36</td><td><a class="ob e"><svg width="11" height="11" viewBox="0 0 12 12" ><path fill="#fff" d="M0 12 L.8 8.200 L7.100 1.900 L10.100 4.900 L3.800 11.200Z M7.900 1.100 L8.700 .3 Q9.200 -.2 9.800 .3 L11.700 2.200 Q12.200 2.800 11.700 3.300 L10.900 4.100Z"/></svg></a><a class="ob d"><svg width="9.5" height="11" viewBox="0 0 11 13" ><path fill="#fff" fill-rule="evenodd" d="M4 0.3h3.2l.6 1.3H10.6q.4 0 .4.4v.7q0 .4-.4.4H.4Q0 3.100 0 2.700V2q0-.4.4-.4H3.300Z M1 3.800H10V11.500q0 1.200-1.200 1.200H2.200Q1 12.700 1 11.500Z M3.100 5.400V11.200H3.900V5.400Z M5.100 5.400V11.200H5.900V5.400Z M7.100 5.400V11.200H7.900V5.400Z"/></svg></a></td></tr>
<tr><td><i class="cb"></i></td><td>54</td><td>6</td><td>0.000000</td><td><span class="s p"><i></i>未领取</span></td><td><span class="s g"><i></i>工作中</span></td><td>2023-09-16 09:58:02</td><td>2023-09-17 09:58:02</td><td><a class="ob e"><svg width="11" height="11" viewBox="0 0 12 12" ><path fill="#fff" d="M0 12 L.8 8.200 L7.100 1.900 L10.100 4.900 L3.800 11.200Z M7.900 1.100 L8.700 .3 Q9.200 -.2 9.800 .3 L11.700 2.200 Q12.200 2.800 11.700 3.300 L10.900 4.100Z"/></svg></a><a class="ob d"><svg width="9.5" height="11" viewBox="0 0 11 13" ><path fill="#fff" fill-rule="evenodd" d="M4 0.3h3.2l.6 1.3H10.6q.4 0 .4.4v.7q0 .4-.4.4H.4Q0 3.100 0 2.700V2q0-.4.4-.4H3.300Z M1 3.800H10V11.500q0 1.200-1.200 1.200H2.200Q1 12.700 1 11.500Z M3.100 5.400V11.200H3.900V5.400Z M5.100 5.400V11.200H5.900V5.400Z M7.100 5.400V11.200H7.900V5.400Z"/></svg></a></td></tr>
<tr><td><i class="cb"></i></td><td>53</td><td>5</td><td>0.000000</td><td><span class="s p"><i></i>未领取</span></td><td><span class="s g"><i></i>工作中</span></td><td>2023-09-16 09:56:39</td><td>2023-09-17 09:56:39</td><td><a class="ob e"><svg width="11" height="11" viewBox="0 0 12 12" ><path fill="#fff" d="M0 12 L.8 8.200 L7.100 1.900 L10.100 4.900 L3.800 11.200Z M7.900 1.100 L8.700 .3 Q9.200 -.2 9.800 .3 L11.700 2.200 Q12.200 2.800 11.700 3.300 L10.900 4.100Z"/></svg></a><a class="ob d"><svg width="9.5" height="11" viewBox="0 0 11 13" ><path fill="#fff" fill-rule="evenodd" d="M4 0.3h3.2l.6 1.3H10.6q.4 0 .4.4v.7q0 .4-.4.4H.4Q0 3.100 0 2.700V2q0-.4.4-.4H3.300Z M1 3.800H10V11.500q0 1.200-1.200 1.200H2.200Q1 12.700 1 11.500Z M3.100 5.400V11.200H3.900V5.400Z M5.100 5.400V11.200H5.900V5.400Z M7.100 5.400V11.200H7.900V5.400Z"/></svg></a></td></tr>
<tr><td><i class="cb"></i></td><td>52</td><td>4</td><td>0.000000</td><td><span class="s p"><i></i>未领取</span></td><td><span class="s g"><i></i>工作中</span></td><td>2023-09-16 09:55:53</td><td>2023-09-17 09:55:53</td><td><a class="ob e"><svg width="11" height="11" viewBox="0 0 12 12" ><path fill="#fff" d="M0 12 L.8 8.200 L7.100 1.900 L10.100 4.900 L3.800 11.200Z M7.900 1.100 L8.700 .3 Q9.200 -.2 9.800 .3 L11.700 2.200 Q12.200 2.800 11.700 3.300 L10.900 4.100Z"/></svg></a><a class="ob d"><svg width="9.5" height="11" viewBox="0 0 11 13" ><path fill="#fff" fill-rule="evenodd" d="M4 0.3h3.2l.6 1.3H10.6q.4 0 .4.4v.7q0 .4-.4.4H.4Q0 3.100 0 2.700V2q0-.4.4-.4H3.300Z M1 3.800H10V11.500q0 1.200-1.200 1.200H2.200Q1 12.700 1 11.500Z M3.100 5.400V11.200H3.900V5.400Z M5.100 5.400V11.200H5.900V5.400Z M7.100 5.400V11.200H7.900V5.400Z"/></svg></a></td></tr>
<tr><td><i class="cb"></i></td><td>51</td><td>3</td><td>0.000000</td><td><span class="s p"><i></i>未领取</span></td><td><span class="s g"><i></i>工作中</span></td><td>2023-09-16 09:55:22</td><td>2023-09-17 09:55:22</td><td><a class="ob e"><svg width="11" height="11" viewBox="0 0 12 12" ><path fill="#fff" d="M0 12 L.8 8.200 L7.100 1.900 L10.100 4.900 L3.800 11.200Z M7.900 1.100 L8.700 .3 Q9.200 -.2 9.800 .3 L11.700 2.200 Q12.200 2.800 11.700 3.300 L10.900 4.100Z"/></svg></a><a class="ob d"><svg width="9.5" height="11" viewBox="0 0 11 13" ><path fill="#fff" fill-rule="evenodd" d="M4 0.3h3.2l.6 1.3H10.6q.4 0 .4.4v.7q0 .4-.4.4H.4Q0 3.100 0 2.700V2q0-.4.4-.4H3.300Z M1 3.800H10V11.500q0 1.200-1.200 1.200H2.200Q1 12.700 1 11.500Z M3.100 5.400V11.200H3.900V5.400Z M5.100 5.400V11.200H5.900V5.400Z M7.100 5.400V11.200H7.900V5.400Z"/></svg></a></td></tr>
<tr><td><i class="cb"></i></td><td>50</td><td>2</td><td>0.000000</td><td><span class="s p"><i></i>未领取</span></td><td><span class="s g"><i></i>工作中</span></td><td>2023-09-16 09:55:07</td><td>2023-09-17 09:55:07</td><td><a class="ob e"><svg width="11" height="11" viewBox="0 0 12 12" ><path fill="#fff" d="M0 12 L.8 8.200 L7.100 1.900 L10.100 4.900 L3.800 11.200Z M7.900 1.100 L8.700 .3 Q9.200 -.2 9.800 .3 L11.700 2.200 Q12.200 2.800 11.700 3.300 L10.900 4.100Z"/></svg></a><a class="ob d"><svg width="9.5" height="11" viewBox="0 0 11 13" ><path fill="#fff" fill-rule="evenodd" d="M4 0.3h3.2l.6 1.3H10.6q.4 0 .4.4v.7q0 .4-.4.4H.4Q0 3.100 0 2.700V2q0-.4.4-.4H3.300Z M1 3.800H10V11.500q0 1.200-1.200 1.200H2.200Q1 12.700 1 11.500Z M3.100 5.400V11.200H3.900V5.400Z M5.100 5.400V11.200H5.900V5.400Z M7.100 5.400V11.200H7.900V5.400Z"/></svg></a></td></tr>
<tr><td><i class="cb"></i></td><td>49</td><td>1</td><td>0.000000</td><td><span class="s p"><i></i>未领取</span></td><td><span class="s g"><i></i>工作中</span></td><td>2023-09-16 09:55:04</td><td>2023-09-17 09:55:04</td><td><a class="ob e"><svg width="11" height="11" viewBox="0 0 12 12" ><path fill="#fff" d="M0 12 L.8 8.200 L7.100 1.900 L10.100 4.900 L3.800 11.200Z M7.900 1.100 L8.700 .3 Q9.200 -.2 9.800 .3 L11.700 2.200 Q12.200 2.800 11.700 3.300 L10.900 4.100Z"/></svg></a><a class="ob d"><svg width="9.5" height="11" viewBox="0 0 11 13" ><path fill="#fff" fill-rule="evenodd" d="M4 0.3h3.2l.6 1.3H10.6q.4 0 .4.4v.7q0 .4-.4.4H.4Q0 3.100 0 2.700V2q0-.4.4-.4H3.300Z M1 3.800H10V11.500q0 1.200-1.200 1.200H2.200Q1 12.700 1 11.500Z M3.100 5.400V11.200H3.900V5.400Z M5.100 5.400V11.200H5.900V5.400Z M7.100 5.400V11.200H7.900V5.400Z"/></svg></a></td></tr>
<tr><td><i class="cb"></i></td><td>48</td><td>7</td><td>0.000000</td><td><span class="s p"><i></i>未领取</span></td><td><span class="s g"><i></i>工作中</span></td><td>2023-09-15 23:08:19</td><td>2023-09-16 23:08:19</td><td><a class="ob e"><svg width="11" height="11" viewBox="0 0 12 12" ><path fill="#fff" d="M0 12 L.8 8.200 L7.100 1.900 L10.100 4.900 L3.800 11.200Z M7.900 1.100 L8.700 .3 Q9.200 -.2 9.800 .3 L11.700 2.200 Q12.200 2.800 11.700 3.300 L10.900 4.100Z"/></svg></a><a class="ob d"><svg width="9.5" height="11" viewBox="0 0 11 13" ><path fill="#fff" fill-rule="evenodd" d="M4 0.3h3.2l.6 1.3H10.6q.4 0 .4.4v.7q0 .4-.4.4H.4Q0 3.100 0 2.700V2q0-.4.4-.4H3.300Z M1 3.800H10V11.500q0 1.200-1.200 1.200H2.200Q1 12.700 1 11.500Z M3.100 5.400V11.200H3.900V5.400Z M5.100 5.400V11.200H5.900V5.400Z M7.100 5.400V11.200H7.900V5.400Z"/></svg></a></td></tr>
<tr><td><i class="cb"></i></td><td>47</td><td>8</td><td>0.002685</td><td><span class="s g"><i></i>已领取</span></td><td><span class="s p"><i></i>结束</span></td><td>2023-09-15 15:43:36</td><td>2023-09-16 15:43:36</td><td><a class="ob e"><svg width="11" height="11" viewBox="0 0 12 12" ><path fill="#fff" d="M0 12 L.8 8.200 L7.100 1.900 L10.100 4.900 L3.800 11.200Z M7.900 1.100 L8.700 .3 Q9.200 -.2 9.800 .3 L11.700 2.200 Q12.200 2.800 11.700 3.300 L10.900 4.100Z"/></svg></a><a class="ob d"><svg width="9.5" height="11" viewBox="0 0 11 13" ><path fill="#fff" fill-rule="evenodd" d="M4 0.3h3.2l.6 1.3H10.6q.4 0 .4.4v.7q0 .4-.4.4H.4Q0 3.100 0 2.700V2q0-.4.4-.4H3.300Z M1 3.800H10V11.500q0 1.200-1.200 1.200H2.200Q1 12.700 1 11.500Z M3.100 5.400V11.200H3.900V5.400Z M5.100 5.400V11.200H5.900V5.400Z M7.100 5.400V11.200H7.900V5.400Z"/></svg></a></td></tr>
<tr><td><i class="cb"></i></td><td>46</td><td>6</td><td>0.004455</td><td><span class="s g"><i></i>已领取</span></td><td><span class="s p"><i></i>结束</span></td><td>2023-09-15 09:58:02</td><td>2023-09-16 09:58:02</td><td><a class="ob e"><svg width="11" height="11" viewBox="0 0 12 12" ><path fill="#fff" d="M0 12 L.8 8.200 L7.100 1.900 L10.100 4.900 L3.800 11.200Z M7.900 1.100 L8.700 .3 Q9.200 -.2 9.800 .3 L11.700 2.200 Q12.200 2.800 11.700 3.300 L10.900 4.100Z"/></svg></a><a class="ob d"><svg width="9.5" height="11" viewBox="0 0 11 13" ><path fill="#fff" fill-rule="evenodd" d="M4 0.3h3.2l.6 1.3H10.6q.4 0 .4.4v.7q0 .4-.4.4H.4Q0 3.100 0 2.700V2q0-.4.4-.4H3.300Z M1 3.800H10V11.500q0 1.200-1.200 1.200H2.200Q1 12.700 1 11.500Z M3.100 5.400V11.200H3.900V5.400Z M5.100 5.400V11.200H5.900V5.400Z M7.100 5.400V11.200H7.900V5.400Z"/></svg></a></td></tr>
</tbody>
</table>
<div class="pinfo">显示第 1 到第 10 条记录，总共 55 条记录 每页显示 <span class="psize">10<span class="cu"><svg width="8" height="4" viewBox="0 0 8 4" ><path fill="#333" d="M0 4 H8 L4 0Z"/></svg></span></span> 条记录</div>
<ul class="pager"><li class="" style="width:67px">上一页</li><li class="on" style="width:34px">1</li><li class="" style="width:33px">2</li><li class="" style="width:33px">3</li><li class="" style="width:32px">4</li><li class="" style="width:33px">5</li><li class="" style="width:33px">6</li><li class="" style="width:67px">下一页</li></ul>
<div class="jump"></div><a class="jbtn">跳转</a>
</section>
</body>
</html>
